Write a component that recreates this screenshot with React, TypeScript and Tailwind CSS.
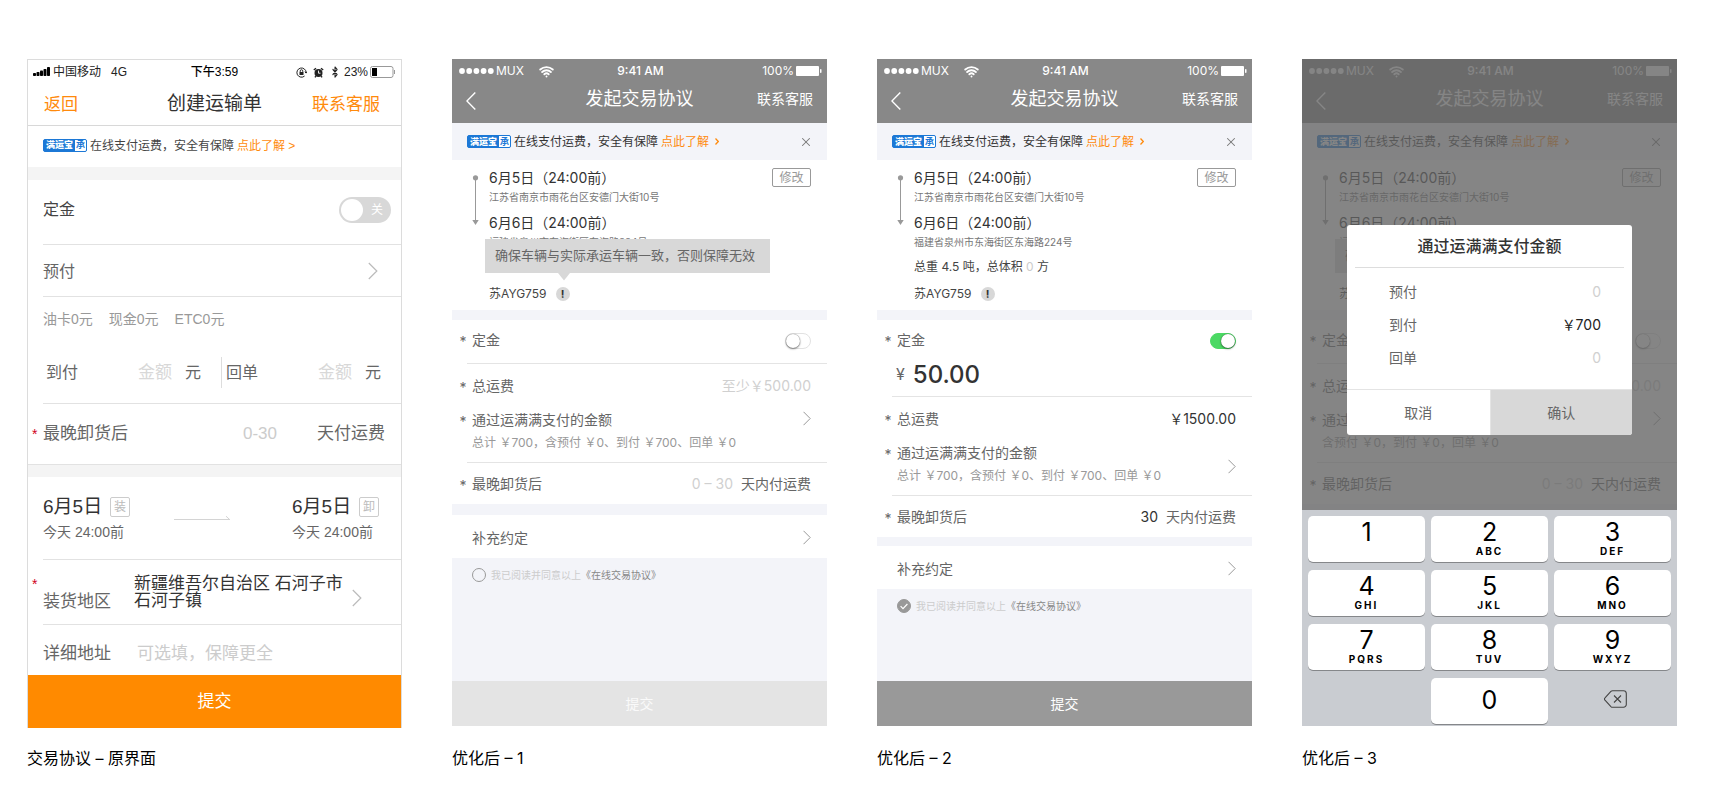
import React, { useState } from 'react';
import { Wifi, AlarmClock, Bluetooth, X } from 'lucide-react';

const Chevron = ({ className = '' }: { className?: string }) => (
  <svg className={`h-[15px] w-2 flex-none ${className}`} viewBox="0 0 8 15" fill="none" stroke="currentColor" aria-hidden="true">
    <path d="M0.5 0.8 7.2 7.5 0.5 14.2" />
  </svg>
);

const Badge = () => (
  <span className="flex h-[13px] w-11 flex-none items-center overflow-hidden rounded-xs border border-[#1c78d6] bg-[#1c78d6] leading-none">
    <span className="flex-1 text-center text-[9px] font-black text-white">满运宝</span>
    <span className="flex h-[11px] w-[11px] items-center justify-center bg-white text-[9px] font-bold text-[#1c78d6]">承</span>
  </span>
);

const Divider = () => <div className="ml-[15px] h-px bg-[#e4e4e4]" />;

const Required = ({ children }: { children: React.ReactNode }) => (
  <span className="flex items-center">
    <span className="w-5 pt-1 pl-0.5 text-center" aria-hidden="true">*</span>
    {children}
  </span>
);

type FigureProps = {
  caption: string;
  children: React.ReactNode;
};

const Figure = ({ caption, children }: FigureProps) => (
  <figure className="flex min-w-0 flex-col">
    {children}
    <figcaption className="mt-auto pt-[18px] text-base text-black">{caption}</figcaption>
  </figure>
);

/* ---------- original screen ---------- */

const OldLine = () => <div className="ml-[15px] h-px bg-[#e2e2e2]" />;

const RedStar = () => <span className="w-[15px] flex-none pl-1 text-sm leading-4 text-[#d0021b]">*</span>;

const OldStatusBar = () => (
  <div className="grid h-6 grid-cols-[1fr_auto_1fr] items-center px-[5px] text-xs text-[#222]">
    <div className="flex items-center">
      <svg className="mr-[3px] h-2.5 w-[17px]" viewBox="0 0 17 10" fill="#000" aria-hidden="true">
        <rect x="0" y="6" width="3" height="3" rx="0.8" />
        <rect x="3.5" y="5" width="3" height="4" rx="0.8" />
        <rect x="7" y="3.5" width="3" height="5.5" rx="0.8" />
        <rect x="10.5" y="2" width="3" height="7" rx="0.8" />
        <rect x="14" y="0" width="3" height="9" rx="0.8" />
      </svg>
      中国移动
      <span className="ml-2.5">4G</span>
    </div>
    <div className="font-medium text-black">下午3:59</div>
    <div className="flex items-center justify-end">
      <svg className="mr-1.5 h-[11px] w-[11px]" viewBox="0 0 11 11" fill="none" stroke="#222" aria-hidden="true">
        <path d="M8.6 9A4.6 4.6 0 1 1 10.1 5.5M8.8 4.8l1.3 1.3 .9-1.6" />
        <rect x="3.5" y="5" width="4" height="3" fill="#222" stroke="none" />
        <path d="M4.2 5V4a1.3 1.3 0 0 1 2.6 0v1" strokeWidth="0.9" />
      </svg>
      <svg className="mr-1.5 h-[11px] w-[11px]" viewBox="0 0 11 11" fill="none" aria-hidden="true">
        <circle cx="5.5" cy="6" r="4" fill="#222" />
        <path d="M0.8 3 3 1.2M10.2 3 8 1.2M2.8 9.2 2 10.4M8.2 9.2l.8 1.2" stroke="#222" strokeWidth="1.4" />
        <path d="M5.5 3.6v2.6h2" stroke="#fff" strokeWidth="0.9" />
      </svg>
      <Bluetooth className="mr-1 h-3 w-2.5 text-[#222]" strokeWidth={2.5} preserveAspectRatio="none" />
      23%
      <svg className="ml-0.5 h-3 w-[26px]" viewBox="0 0 26 12" aria-hidden="true">
        <rect x="0.5" y="0.5" width="22.5" height="11" rx="2" fill="none" stroke="#999" />
        <rect x="2" y="2" width="5" height="8" fill="#000" />
        <path d="M24.5 4v4" stroke="#999" />
      </svg>
    </div>
  </div>
);

const DateBlock = ({ tag }: { tag: string }) => (
  <div className="w-[87px]">
    <div className="flex h-7 items-center justify-between text-[19px] text-[#333]">
      <span className="whitespace-nowrap">6月5日</span>
      <span className="flex h-5 w-5 flex-none items-center justify-center rounded-xs border border-[#ccc] text-xs text-[#bbb]">{tag}</span>
    </div>
    <div className="text-sm leading-[22px] whitespace-nowrap text-[#666]">今天 24:00前</div>
  </div>
);

const amountInput = 'mr-[13px] w-0 flex-1 text-right text-[17px] placeholder:text-[#d8d8d8]';

const OldScreen = () => (
  <div className="flex flex-col border border-b-0 border-[#dcdcdc] bg-white font-['Liberation_Sans','Noto_Sans_CJK_SC',sans-serif] text-[17px] text-[#666]">
    <OldStatusBar />
    <div className="grid h-[41px] grid-cols-[1fr_auto_1fr] items-center px-4 text-[#ff8a0c]">
      <button type="button" className="justify-self-start">返回</button>
      <h2 className="text-[19px] text-[#333]">创建运输单</h2>
      <button type="button" className="justify-self-end pr-[5px]">联系客服</button>
    </div>
    <div className="h-px bg-[#d8d8d8]" />
    <div className="flex h-[41px] items-center pb-0.5 pl-[15px] text-xs text-[#444]">
      <Badge />
      <span className="ml-[3px]">在线支付运费，安全有保障</span>
      <a href="#learn" className="ml-[3px] text-[#ff8a0c]">点此了解 &gt;</a>
    </div>
    <div className="h-[13px] bg-[#f4f4f4]" />

    <label className="flex h-16 items-center justify-between pr-2.5 pb-1 pl-[15px] text-base text-[#444]">
      定金
      <input type="checkbox" role="switch" className="peer sr-only" />
      <span className="flex h-[26px] w-[52px] items-center justify-between rounded-full bg-[#d8d8d8] pr-2 pl-0.5 text-xs text-white">
        <span className="h-[22px] w-[22px] rounded-full bg-white" />
        关
      </span>
    </label>
    <OldLine />
    <button type="button" className="flex h-[51px] items-center justify-between pr-[23px] pl-[15px] text-base">
      <span className="pt-[3px]">预付</span>
      <Chevron className="h-[18px] w-2.5 text-[#bbb]" />
    </button>
    <OldLine />
    <div className="flex h-[43px] items-center gap-4 pl-[15px] text-sm text-[#999]">
      <span>油卡0元</span>
      <span>现金0元</span>
      <span>ETC0元</span>
    </div>
    <div className="grid h-[63px] grid-cols-[194px_minmax(0,1fr)] items-center pt-0.5 text-base">
      <label className="flex h-[31px] items-center border-r border-[#ddd] pr-5 pl-[18px]">
        到付
        <input placeholder="金额" className={amountInput} />
        元
      </label>
      <label className="flex items-center pr-5 pl-1">
        回单
        <input placeholder="金额" className={amountInput} />
        元
      </label>
    </div>
    <OldLine />
    <label className="flex h-[60px] items-center pr-4">
      <RedStar />
      最晚卸货后
      <input placeholder="0-30" className="mr-10 w-0 flex-1 text-right placeholder:text-[#ccc]" />
      天付运费
    </label>
    <div className="h-[13px] border-t border-[#e2e2e2] bg-[#f4f4f4]" />

    <div className="flex items-start py-4 pr-[22px] pl-[15px]">
      <DateBlock tag="装" />
      <svg className="mt-[22px] mr-auto ml-11 h-1.5 w-14" viewBox="0 0 56 6" fill="none" stroke="#d4d4d4" aria-hidden="true">
        <path d="M0 4.5h56M52 1.2l3.6 3.3" />
      </svg>
      <DateBlock tag="卸" />
    </div>
    <OldLine />
    <button type="button" className="flex h-16 items-center text-left leading-[17px]">
      <span className="mb-4 flex"><RedStar /></span>
      <span className="mt-[18px] w-[91px] flex-none">装货地区</span>
      <span className="w-[218px] flex-none text-[#333]">新疆维吾尔自治区 石河子市石河子镇</span>
      <Chevron className="mt-3 h-[18px] w-2.5 text-[#bbb]" />
    </button>
    <OldLine />
    <label className="flex h-[50px] items-center pt-2 pl-[15px]">
      <span className="w-[94px] flex-none">详细地址</span>
      <input placeholder="可选填，保障更全" className="w-0 flex-1 placeholder:text-[#ccc]" />
    </label>
    <button type="button" className="h-[53px] bg-[#ff8a00] text-white">提交</button>
  </div>
);

/* ---------- redesigned screens ---------- */

const StatusBar = () => (
  <div className="grid h-5 grid-cols-[1fr_auto_1fr] items-center pt-0.5 pr-[5px] pl-[7px] text-xs leading-5">
    <div className="flex items-center">
      <svg className="mr-0.5 h-1.5 w-[35px]" viewBox="0 0 35 6" fill="currentColor" aria-hidden="true">
        <circle cx="3" cy="3" r="2.9" />
        <circle cx="10.2" cy="3" r="2.9" />
        <circle cx="17.4" cy="3" r="2.9" />
        <circle cx="24.6" cy="3" r="2.9" />
        <circle cx="31.8" cy="3" r="2.9" />
      </svg>
      MUX
      <Wifi className="ml-[15px] h-[15px] w-[15px]" strokeWidth={3} />
    </div>
    <div className="font-medium">9:41 AM</div>
    <div className="flex items-center justify-end">
      100%
      <svg className="ml-0.5 h-2.5 w-[26px]" viewBox="0 0 26 10" fill="currentColor" aria-hidden="true">
        <rect width="23" height="10" rx="1" />
        <rect x="24" y="3" width="1.5" height="4" rx="0.7" />
      </svg>
    </div>
  </div>
);

const Header = () => (
  <header className="bg-[#888] text-white">
    <StatusBar />
    <div className="grid h-11 grid-cols-[1fr_auto_1fr] items-center pr-3.5 pb-1 pl-3.5">
      <button type="button" aria-label="返回" className="pt-1">
        <svg className="h-[18px] w-2.5" viewBox="0 0 10 18" fill="none" stroke="currentColor" strokeWidth="1.4" aria-hidden="true">
          <path d="M9.3 0.6 0.9 9l8.4 8.4" />
        </svg>
      </button>
      <h2 className="text-lg">发起交易协议</h2>
      <button type="button" className="justify-self-end text-sm">联系客服</button>
    </div>
  </header>
);

const Banner = () => (
  <div className="flex h-[37px] items-center bg-[#f3f4f9] pr-3.5 pl-[15px] text-xs text-[#333]">
    <Badge />
    <span className="ml-[3px]">在线支付运费，安全有保障</span>
    <a href="#learn" className="ml-[3px] flex items-center text-[#ff8a0c]">
      点此了解
      <svg className="ml-1.5 h-[7px] w-1" viewBox="0 0 4 7" fill="none" stroke="currentColor" strokeWidth="1.3" aria-hidden="true">
        <path d="M0.5 0.5 3.3 3.5l-2.8 3" />
      </svg>
    </a>
    <button type="button" aria-label="关闭" className="ml-auto text-[#777]">
      <X className="h-3.5 w-3.5" strokeWidth={1.8} />
    </button>
  </div>
);

const Route = ({ tooltip }: { tooltip?: boolean }) => (
  <section className="relative flex gap-2.5 py-2 pr-4 pl-5 text-xs text-[#444]">
    <svg className="mt-[7px] h-[51px] w-[7px] flex-none" viewBox="0 0 7 51" fill="#999" aria-hidden="true">
      <circle cx="3.5" cy="2.8" r="2.6" />
      <path d="M3 3h1v43H3zM0.3 45h6.4L3.5 50z" />
    </svg>
    <div className="flex-1">
      <p className="text-sm leading-5 text-[#333]">6月5日（24:00前）</p>
      <p className="mt-px text-[10px] leading-4 text-[#777]">江苏省南京市雨花台区安德门大街10号</p>
      <p className="mt-2 text-sm leading-5 text-[#333]">6月6日（24:00前）</p>
      <p className="mt-px text-[10px] leading-4 text-[#777]">福建省泉州市东海街区东海路224号</p>
      <p className="mt-[9px] leading-4">
        总重 4.5 吨，总体积 <span className="text-[#ccc]">0</span> 方
      </p>
      <p className="mt-[11px] flex items-center leading-4">
        苏AYG759
        <span className="ml-[9px] flex h-3.5 w-3.5 items-center justify-center rounded-full bg-[#d8d8d8] text-[11px] font-bold text-[#333]">!</span>
      </p>
    </div>
    <button type="button" className="h-[19px] w-[39px] flex-none rounded-xs border border-[#999] text-xs leading-4 text-[#999]">修改</button>
    {tooltip && (
      <div role="tooltip" className="absolute top-[79px] left-[33px] flex h-[34px] w-[285px] items-center bg-[#d8d8d8] pl-2.5 text-[13px] whitespace-nowrap text-[#666]">
        确保车辆与实际承运车辆一致，否则保障无效
        <svg className="absolute top-full left-[73px] h-2 w-3" viewBox="0 0 12 8" fill="#d8d8d8" aria-hidden="true">
          <path d="M0 0h12L6 7.5z" />
        </svg>
      </div>
    )}
  </section>
);

type AgreementScreenProps = {
  summary: string;
  filled?: boolean;
  tooltip?: boolean;
  children?: React.ReactNode;
};

const AgreementScreen = ({ summary, filled = false, tooltip, children }: AgreementScreenProps) => {
  const [deposit, setDeposit] = useState(filled);
  const [agreed, setAgreed] = useState(filled);

  return (
    <div className="relative flex min-h-[667px] flex-col bg-white font-['Inter','Noto_Sans_CJK_SC',sans-serif] text-sm text-[#666]">
      <Header />
      <Banner />
      <Route tooltip={tooltip} />

      <section className="border-t-10 border-[#f3f4f9]">
        <label className="flex h-[43px] items-center justify-between pr-4 pb-[3px]">
          <Required>定金</Required>
          <input
            type="checkbox"
            role="switch"
            className="peer sr-only"
            checked={deposit}
            onChange={(e) => setDeposit(e.target.checked)}
          />
          <span className="mt-0.5 flex h-4 w-[26px] items-center rounded-full border border-[#e2e2e2] bg-white peer-checked:justify-end peer-checked:border-[#4cd964] peer-checked:bg-[#4cd964]">
            <span className="h-3.5 w-3.5 rounded-full bg-white shadow-[0_1px_2px_rgba(0,0,0,0.45),0_0_1px_rgba(0,0,0,0.6)]" />
          </span>
        </label>
        {deposit && (
          <label className="mb-[9px] flex h-6 items-center pb-0.5 pl-[19px] text-base">
            ¥
            <input aria-label="定金金额" defaultValue="50.00" className="ml-2 w-40 text-2xl leading-6 font-medium text-[#333]" />
          </label>
        )}
        <Divider />
        <label className="flex h-11 items-center justify-between pr-4">
          <Required>总运费</Required>
          <input
            defaultValue={filled ? '￥1500.00' : ''}
            placeholder="至少￥500.00"
            className="w-32 text-right text-[#333] placeholder:text-[#d0d0d0]"
          />
        </label>
        <button type="button" className={`mb-[7px] flex w-full justify-between pr-4 text-left ${filled ? 'items-center' : 'items-start'}`}>
          <span>
            <span className="flex h-[23px] items-center"><Required>通过运满满支付的金额</Required></span>
            <span className="block pl-5 text-xs leading-6 whitespace-pre text-[#999]">{summary}</span>
          </span>
          <Chevron className="mt-[3px] text-[#999]" />
        </button>
        <Divider />
        <label className="flex h-[41px] items-center pr-4">
          <Required>最晚卸货后</Required>
          <input
            defaultValue={filled ? '30' : ''}
            placeholder="0 – 30"
            className="mr-2 w-0 flex-1 text-right text-[#333] placeholder:text-[#d0d0d0]"
          />
          天内付运费
        </label>
      </section>
      <div className={filled ? 'h-[9px] bg-[#f3f4f9]' : 'h-[11px] bg-[#f3f4f9]'} />
      <button type="button" className="flex h-[43px] items-center justify-between pt-0.5 pr-4 pl-5">
        补充约定
        <Chevron className="text-[#999]" />
      </button>

      <div className="flex-1 bg-[#f3f4f9] pt-[9px] pl-5">
        <label className="flex h-4 items-center text-[10px] text-[#ccc]">
          <input type="checkbox" className="sr-only" checked={agreed} onChange={(e) => setAgreed(e.target.checked)} />
          <svg className="mr-[5px] h-3.5 w-3.5" viewBox="0 0 14 14" fill="none" aria-hidden="true">
            <circle cx="7" cy="7" r="6.5" stroke="#999" fill={agreed ? '#999' : 'none'} />
            {agreed && <path d="M3.6 7.2 6 9.6l4.4-4.6" stroke="#fff" strokeWidth="1.2" />}
          </svg>
          我已阅读并同意以上
          <a href="#agreement" className="text-[#888]">《在线交易协议》</a>
        </label>
      </div>
      <button
        type="button"
        disabled={!agreed}
        className="h-[45px] bg-[#999] text-white disabled:bg-[#e4e4e4] disabled:text-[#fafafa]"
      >
        提交
      </button>
      {children}
    </div>
  );
};

const amounts = [
  { label: '预付', value: '' },
  { label: '到付', value: '￥700' },
  { label: '回单', value: '' },
];

const AmountDialog = () => (
  <div role="dialog" aria-label="通过运满满支付金额" className="absolute inset-x-[45px] top-[166px] overflow-hidden rounded-[3px] bg-white">
    <h3 className="mx-2 h-[43px] border-b border-[#ddd] text-center text-base leading-[43px] font-medium text-[#333]">通过运满满支付金额</h3>
    <div className="pt-[7px] pr-[31px] pb-[15px] pl-[42px]">
      {amounts.map(({ label, value }) => (
        <label key={label} className="flex h-[33px] items-center justify-between">
          {label}
          <input defaultValue={value} placeholder="0" className="w-24 text-right text-[#222] placeholder:text-[#d0d0d0]" />
        </label>
      ))}
    </div>
    <div className="grid h-[46px] grid-cols-2 border-t border-[#e4e4e4]">
      <button type="button">取消</button>
      <button type="button" className="border-l border-[#e4e4e4] bg-[#d8d8d8]">确认</button>
    </div>
  </div>
);

const keys = [
  ['1', ''],
  ['2', 'ABC'],
  ['3', 'DEF'],
  ['4', 'GHI'],
  ['5', 'JKL'],
  ['6', 'MNO'],
  ['7', 'PQRS'],
  ['8', 'TUV'],
  ['9', 'WXYZ'],
];

const keyClass = 'flex h-[46px] flex-col items-center rounded-[5px] bg-white shadow-[0_1px_0_#85878a]';

const Keypad = () => (
  <div className="absolute inset-x-0 bottom-0 grid grid-cols-3 gap-x-1.5 gap-y-2 bg-[#c9ccd1] px-1.5 pt-1.5 pb-0.5 text-black">
    {keys.map(([digit, letters]) => (
      <button key={digit} type="button" className={keyClass}>
        <span className="pt-0.5 text-[25px] leading-7">{digit}</span>
        <span className="text-[10px] leading-2.5 font-bold tracking-[2px]">{letters}</span>
      </button>
    ))}
    <span />
    <button type="button" className={`${keyClass} justify-center text-[25px]`}>0</button>
    <button type="button" aria-label="删除" className="flex items-center justify-center pb-1 pl-1.5">
      <svg className="h-[18px] w-[23px]" viewBox="0 0 23 18" fill="none" stroke="#444" strokeWidth="1.1" aria-hidden="true">
        <path d="M8.6 0.7H19.5a2.8 2.8 0 0 1 2.8 2.8v11a2.8 2.8 0 0 1-2.8 2.8H8.6a2.4 2.4 0 0 1-1.7-.7L1 10.2a1.7 1.7 0 0 1 0-2.4L6.9 1.4a2.4 2.4 0 0 1 1.7-.7Z" />
        <path d="m10 5.5 7 7m0-7-7 7" />
      </svg>
    </button>
  </div>
);

const App = () => {
  const fullSummary = '总计 ￥700，含预付 ￥0、到付 ￥700、回单 ￥0';

  return (
    <main className="grid min-h-screen grid-cols-4 content-start gap-x-[50px] bg-white pt-[59px] pr-9 pb-4 pl-[27px] font-['Inter','Noto_Sans_CJK_SC',sans-serif]">
      <Figure caption="交易协议 – 原界面">
        <OldScreen />
      </Figure>
      <Figure caption="优化后 – 1">
        <AgreementScreen summary={fullSummary} tooltip />
      </Figure>
      <Figure caption="优化后 – 2">
        <AgreementScreen summary={fullSummary} filled />
      </Figure>
      <Figure caption="优化后 – 3">
        <AgreementScreen summary="含预付 ￥0，到付 ￥0，回单 ￥0" tooltip>
          <div className="absolute inset-0 bg-[#636363]/78" />
          <AmountDialog />
          <Keypad />
        </AgreementScreen>
      </Figure>
    </main>
  );
};

export default App;
